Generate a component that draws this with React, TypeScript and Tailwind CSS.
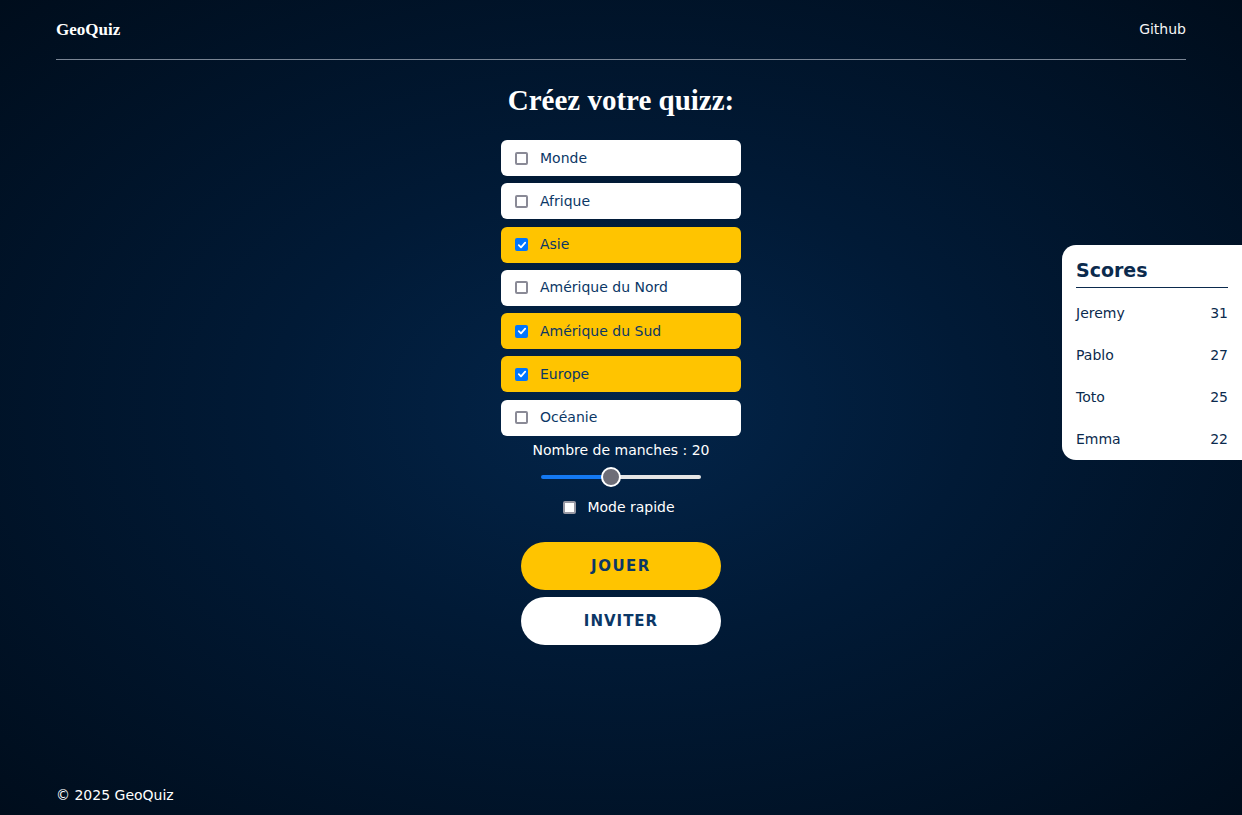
import React from "react";

const regions = [
  { name: "Monde", checked: false },
  { name: "Afrique", checked: false },
  { name: "Asie", checked: true },
  { name: "Amérique du Nord", checked: false },
  { name: "Amérique du Sud", checked: true },
  { name: "Europe", checked: true },
  { name: "Océanie", checked: false },
];

const scores = [
  { name: "Jeremy", score: 31 },
  { name: "Pablo", score: 27 },
  { name: "Toto", score: 25 },
  { name: "Emma", score: 22 },
];

function Box({ checked }: { checked: boolean }) {
  if (checked) {
    return (
      <span className="flex h-[13px] w-[13px] items-center justify-center rounded-[2px] bg-[#0075ff]">
        <svg width="10" height="10" viewBox="0 0 10 10">
          <path d="M1.8 5.2 L4 7.3 L8.2 2.6" fill="none" stroke="white" strokeWidth="1.8" strokeLinecap="round" strokeLinejoin="round" />
        </svg>
      </span>
    );
  }
  return <span className="h-[13px] w-[13px] rounded-[2px] border-2 border-[#8a8a96] bg-white" />;
}

export default function App() {
  return (
    <div
      className="relative flex min-h-[815px] flex-col text-white bg-[radial-gradient(ellipse_at_50%_50%,#03254a_0%,#011a36_40%,#000d1c_100%)]"
      style={{ fontFamily: '"DejaVu Sans", sans-serif' }}
    >
      <header className="mx-[56px] flex h-[60px] items-center justify-between border-b border-[#7a8594]">
        <span className="text-[17px] font-bold" style={{ fontFamily: '"Liberation Serif", serif' }}>GeoQuiz</span>
        <span className="text-[14px] font-normal text-[#f5f5f5]">Github</span>
      </header>

      <main className="flex flex-1 flex-col items-center">
        <h1 className="mt-[22px] text-[29px] font-bold leading-[36px]" style={{ fontFamily: '"Liberation Serif", serif' }}>
          Créez votre quizz:
        </h1>
        <div className="mt-[22px] flex w-[240px] flex-col gap-[7.3px]">
          {regions.map((r) => (
            <div
              key={r.name}
              className={`flex h-[36px] items-center gap-[12px] rounded-[6px] px-[14px] ${r.checked ? "bg-[#ffc400]" : "bg-white"}`}
            >
              <Box checked={r.checked} />
              <span className="text-[14px] text-[#0b3766]">{r.name}</span>
            </div>
          ))}
        </div>
        <div className="mt-[5px] text-[14px] font-medium leading-[18px]">Nombre de manches : 20</div>
        <div className="relative mt-[8px] flex h-[20px] w-[160px] items-center">
          <div className="h-[4px] w-[70px] rounded-l-full bg-[#1479f2]" />
          <div className="h-[4px] flex-1 rounded-r-full bg-[#e5e5e5]" />
          <div className="absolute left-[60px] top-0 h-[20px] w-[20px] rounded-full border-2 border-white bg-[#6e6e78]" />
        </div>
        <label className="mt-[10px] flex items-center gap-[11px] pr-[4px]">
          <span className="h-[13px] w-[13px] rounded-[2px] border-2 border-[#9a9aa4] bg-white" />
          <span className="text-[14px] font-medium">Mode rapide</span>
        </label>
        <button className="mt-[24px] h-[48px] w-[200px] rounded-full bg-[#ffc400] text-[15px] font-bold tracking-[1.5px] text-[#0b3766]">
          JOUER
        </button>
        <button className="mt-[7px] h-[48px] w-[200px] rounded-full bg-white text-[15px] font-bold tracking-[1px] text-[#0b3766]">
          INVITER
        </button>
      </main>

      <footer className="mx-[56px] flex h-[30px] items-start text-[14px] font-medium">© 2025 GeoQuiz</footer>

      <aside className="absolute right-0 top-[245px] w-[180px] rounded-l-[14px] bg-white px-[14px] pb-[0px] pt-[12px] text-[#0b2a4d]">
        <div className="border-b border-[#0b2a4d] pb-[4px] text-[19px] font-bold leading-[26px]">Scores</div>
        <div className="flex flex-col pt-[4px]">
          {scores.map((s) => (
            <div key={s.name} className="flex h-[42px] items-center justify-between text-[14px]">
              <span>{s.name}</span>
              <span>{s.score}</span>
            </div>
          ))}
        </div>
      </aside>
    </div>
  );
}
